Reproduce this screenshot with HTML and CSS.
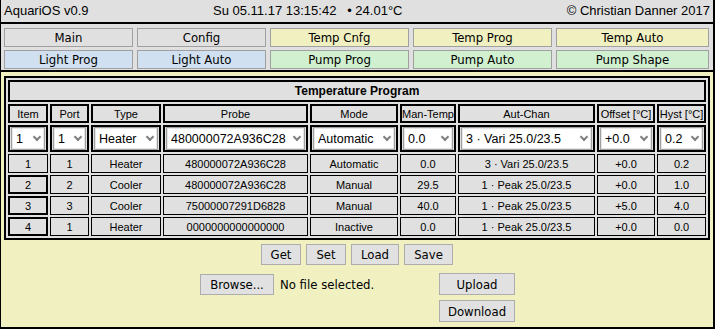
FILE: index.html
```html
<!DOCTYPE html>
<html lang="en">
<head>
    <meta charset="UTF-8" />
    <title>AquariOS - Temperature Program</title>
    <link rel="stylesheet" href="styles.css">
</head>
<body>
    <div class="frame">
        <header class="topbar">
            <span class="brand">AquariOS v0.9</span>
            <span class="clock">Su 05.11.17 13:15:42&nbsp;&nbsp; &bull; 24.01°C</span>
            <span class="copy">© Christian Danner 2017</span>
        </header>

        <nav class="menu">
            <a class="tab grey">Main</a>
            <a class="tab grey">Config</a>
            <a class="tab yellow">Temp Cnfg</a>
            <a class="tab yellow">Temp Prog</a>
            <a class="tab yellow">Temp Auto</a>
            <a class="tab blue">Light Prog</a>
            <a class="tab blue">Light Auto</a>
            <a class="tab green">Pump Prog</a>
            <a class="tab green">Pump Auto</a>
            <a class="tab green">Pump Shape</a>
        </nav>

        <main class="content">
            <table class="prog">
                <colgroup>
                    <col class="c-item">
                    <col class="c-port">
                    <col class="c-type">
                    <col class="c-probe">
                    <col class="c-mode">
                    <col class="c-man">
                    <col class="c-aut">
                    <col class="c-off">
                    <col class="c-hyst">
                </colgroup>
                <tr>
                    <td class="title" colspan="9">Temperature Program</td>
                </tr>
                <tr class="head">
                    <th>Item</th>
                    <th>Port</th>
                    <th>Type</th>
                    <th>Probe</th>
                    <th>Mode</th>
                    <th>Man-Temp</th>
                    <th>Aut-Chan</th>
                    <th>Offset [°C]</th>
                    <th>Hyst [°C]</th>
                </tr>
                <tr class="edit">
                    <td><span class="pick"><select><option>1</option><option>2</option><option>3</option><option>4</option></select></span></td>
                    <td><span class="pick"><select><option>1</option><option>2</option><option>3</option></select></span></td>
                    <td><span class="pick"><select><option>Heater</option><option>Cooler</option></select></span></td>
                    <td><span class="pick"><select><option>480000072A936C28</option><option>75000007291D6828</option></select></span></td>
                    <td><span class="pick"><select><option>Automatic</option><option>Manual</option><option>Inactive</option></select></span></td>
                    <td><span class="pick"><select><option>0.0</option><option>29.5</option><option>40.0</option></select></span></td>
                    <td><span class="pick"><select><option>3 · Vari 25.0/23.5</option><option>1 · Peak 25.0/23.5</option></select></span></td>
                    <td><span class="pick"><select><option>+0.0</option><option>+5.0</option></select></span></td>
                    <td><span class="pick"><select><option>0.2</option><option>1.0</option><option>4.0</option></select></span></td>
                </tr>
                <tr class="row">
                    <td>1</td><td>1</td><td>Heater</td><td>480000072A936C28</td><td>Automatic</td>
                    <td>0.0</td><td>3 · Vari 25.0/23.5</td><td>+0.0</td><td>0.2</td>
                </tr>
                <tr class="row">
                    <td class="item">2</td><td>2</td><td>Cooler</td><td>480000072A936C28</td><td>Manual</td>
                    <td>29.5</td><td>1 · Peak 25.0/23.5</td><td>+0.0</td><td>1.0</td>
                </tr>
                <tr class="row">
                    <td class="item">3</td><td>3</td><td>Cooler</td><td>75000007291D6828</td><td>Manual</td>
                    <td>40.0</td><td>1 · Peak 25.0/23.5</td><td>+5.0</td><td>4.0</td>
                </tr>
                <tr class="row">
                    <td class="item">4</td><td>1</td><td>Heater</td><td>0000000000000000</td><td>Inactive</td>
                    <td>0.0</td><td>1 · Peak 25.0/23.5</td><td>+0.0</td><td>0.0</td>
                </tr>
            </table>

            <div class="actions">
                <button class="btn w40">Get</button>
                <button class="btn w40">Set</button>
                <button class="btn w48">Load</button>
                <button class="btn w49">Save</button>
            </div>

            <div class="files">
                <div class="file">
                    <button class="btn browse">Browse...</button>
                    <span class="file-name">No file selected.</span>
                </div>
                <div class="updown">
                    <button class="btn wide">Upload</button>
                    <button class="btn wide">Download</button>
                </div>
            </div>
        </main>
    </div>
</body>
</html>
```

FILE: styles.css
```css
* {
    box-sizing: border-box;
}

body {
    margin: 0;
    font-family: "Liberation Sans", Arial, sans-serif;
    color: #000;
}

.frame {
    width: 715px;
    height: 329px;
    display: flex;
    flex-direction: column;
    border-left: 1px solid #000;
    border-right: 2px solid #000;
    border-bottom: 2px solid #000;
}

/* top bar */
.topbar {
    height: 24px;
    display: flex;
    align-items: center;
    padding: 0 3px 1px 3px;
    background-color: #e0e0e0;
    border-bottom: 2px solid #000;
    font-size: 13px;
}

.brand {
    width: 209px;
}

.copy {
    margin-left: auto;
}

/* menu */
.menu {
    display: grid;
    grid-template-columns: 129px 129px 139px 139px 153px;
    grid-auto-rows: 19px;
    gap: 3px 4px;
    padding: 4px 3px 1px 3px;
    background-color: #e0e0e0;
    border-bottom: 2px solid #000;
}

.tab {
    border: 1px solid #a0a0a0;
    text-align: center;
    line-height: 17px;
    font-family: "DejaVu Sans Condensed", "DejaVu Sans", sans-serif;
    font-stretch: condensed;
    font-size: 13px;
}

.tab.grey { background-color: #e0e0e0; }
.tab.yellow { background-color: #f0f0c0; }
.tab.blue { background-color: #d0e0f0; }
.tab.green { background-color: #d0f0d0; }

/* content */
.content {
    flex: 1;
    padding: 4px 3px 0 3px;
    background-color: #f0f0c0;
}

.prog {
    width: 706px;
    table-layout: fixed;
    border: 2px solid #000;
    border-spacing: 2px;
    background-color: #e0e0e0;
    font-size: 11px;
}

.c-item { width: 40px; }
.c-port { width: 39px; }
.c-type { width: 70px; }
.c-probe { width: 145px; }
.c-mode { width: 88px; }
.c-man { width: 56px; }
.c-aut { width: 137px; }
.c-off { width: 58px; }
.c-hyst { width: 49px; }

.prog td,
.prog th {
    padding: 0;
    text-align: center;
    vertical-align: middle;
    font-weight: normal;
    background-color: #e0e0e0;
}

.prog .title {
    height: 22px;
    border: 2px solid #000;
    font-size: 12px;
    font-weight: bold;
}

.head th {
    height: 19px;
    border: 2px solid #000;
    white-space: nowrap;
}

.edit td {
    height: 27px;
    padding: 0 1px;
    border: 2px solid #000;
}

.row td {
    height: 19px;
    border: 1px solid #000;
}

.row td.item {
    border: 2px solid #000;
}

.pick {
    display: block;
    position: relative;
}

.pick select {
    display: block;
    width: 100%;
    height: 23px;
    margin: 0;
    padding: 0 0 0 4px;
    appearance: none;
    -webkit-appearance: none;
    border: 1px solid #a0a0a0;
    border-radius: 0;
    box-shadow: inset 0 0 0 1px #e6e6e6;
    background-color: #fff;
    font-family: "Liberation Sans", Arial, sans-serif;
    font-size: 12.5px;
    color: #000;
}

.pick::after {
    content: "";
    position: absolute;
    right: 5px;
    top: 7px;
    width: 4px;
    height: 4px;
    border-right: 2px solid #808080;
    border-bottom: 2px solid #808080;
    transform: rotate(45deg);
    pointer-events: none;
}

/* buttons */
.btn {
    height: 21px;
    margin: 0;
    padding: 0;
    background-color: #e1e1e1;
    border: 1px solid #adadad;
    border-radius: 0;
    font-family: "DejaVu Sans Condensed", "DejaVu Sans", sans-serif;
    font-stretch: condensed;
    font-size: 13px;
    color: #000;
}

.w40 { width: 40px; }
.w48 { width: 48px; }
.w49 { width: 49px; }

.actions {
    display: flex;
    justify-content: center;
    gap: 5px;
    margin-top: 4px;
}

.files {
    display: flex;
    margin: 8px 0 0 196px;
}

.file {
    width: 239px;
    display: flex;
    align-items: center;
    align-self: flex-start;
    margin-top: 1px;
    gap: 6px;
}

.browse {
    width: 74px;
}

.file-name {
    font-family: "DejaVu Sans Condensed", "DejaVu Sans", sans-serif;
    font-stretch: condensed;
    font-size: 13px;
}

.updown {
    display: flex;
    flex-direction: column;
    gap: 5px;
}

.btn.wide {
    width: 76px;
    height: 22px;
}
```
